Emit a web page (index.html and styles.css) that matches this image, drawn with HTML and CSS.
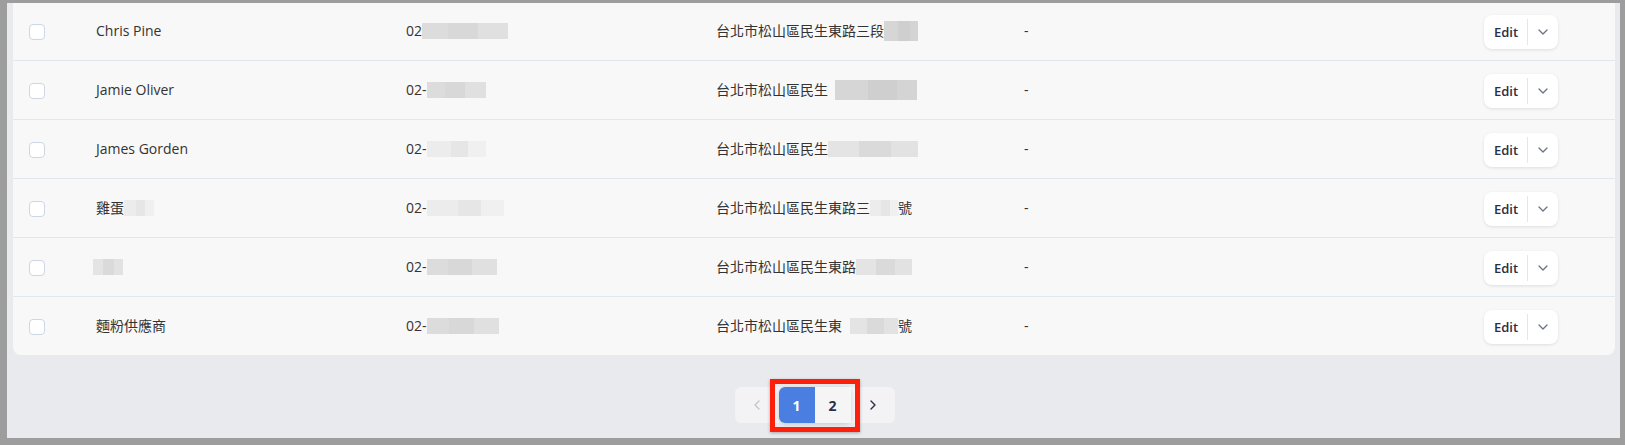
FILE: index.html
```html
<!DOCTYPE html>
<html lang="zh-Hant">
<head>
<meta charset="utf-8">
<title>Suppliers</title>
<link rel="stylesheet" href="styles.css">
</head>
<body>
<div class="screen">
  <div class="card">
    <div class="row">
      <span class="cb"></span>
      <span class="cell">Chris Pine</span>
      <span class="cell">02<span class="blur" style="width:86px"></span></span>
      <span class="cell">台北市松山區民生東路三段<span class="blur dark" style="width:34px"></span></span>
      <span class="cell">-</span>
      <span class="act"><span class="edit">Edit</span><span class="sep"></span><span class="dd"><svg viewBox="0 0 10 6" width="10" height="6"><path d="M1 1l4 4 4-4" fill="none" stroke="currentColor" stroke-width="1.3" stroke-linecap="round" stroke-linejoin="round"/></svg></span></span>
    </div>
    <div class="row">
      <span class="cb"></span>
      <span class="cell">Jamie Oliver</span>
      <span class="cell">02-<span class="blur" style="width:59px"></span></span>
      <span class="cell">台北市松山區民生<span class="blur dark" style="width:82px;margin-left:7px"></span></span>
      <span class="cell">-</span>
      <span class="act"><span class="edit">Edit</span><span class="sep"></span><span class="dd"><svg viewBox="0 0 10 6" width="10" height="6"><path d="M1 1l4 4 4-4" fill="none" stroke="currentColor" stroke-width="1.3" stroke-linecap="round" stroke-linejoin="round"/></svg></span></span>
    </div>
    <div class="row">
      <span class="cb"></span>
      <span class="cell">James Gorden</span>
      <span class="cell">02-<span class="blur light" style="width:59px"></span></span>
      <span class="cell">台北市松山區民生<span class="blur mid" style="width:90px"></span></span>
      <span class="cell">-</span>
      <span class="act"><span class="edit">Edit</span><span class="sep"></span><span class="dd"><svg viewBox="0 0 10 6" width="10" height="6"><path d="M1 1l4 4 4-4" fill="none" stroke="currentColor" stroke-width="1.3" stroke-linecap="round" stroke-linejoin="round"/></svg></span></span>
    </div>
    <div class="row">
      <span class="cb"></span>
      <span class="cell">雞蛋<span class="blur light" style="width:30px"></span></span>
      <span class="cell">02-<span class="blur light" style="width:77px"></span></span>
      <span class="cell">台北市松山區民生東路三<span class="blur light" style="width:28px"></span>號</span>
      <span class="cell">-</span>
      <span class="act"><span class="edit">Edit</span><span class="sep"></span><span class="dd"><svg viewBox="0 0 10 6" width="10" height="6"><path d="M1 1l4 4 4-4" fill="none" stroke="currentColor" stroke-width="1.3" stroke-linecap="round" stroke-linejoin="round"/></svg></span></span>
    </div>
    <div class="row">
      <span class="cb"></span>
      <span class="cell"><span class="blur mid" style="width:30px;margin-left:-3px"></span></span>
      <span class="cell">02-<span class="blur" style="width:70px"></span></span>
      <span class="cell">台北市松山區民生東路<span class="blur mid" style="width:56px"></span></span>
      <span class="cell">-</span>
      <span class="act"><span class="edit">Edit</span><span class="sep"></span><span class="dd"><svg viewBox="0 0 10 6" width="10" height="6"><path d="M1 1l4 4 4-4" fill="none" stroke="currentColor" stroke-width="1.3" stroke-linecap="round" stroke-linejoin="round"/></svg></span></span>
    </div>
    <div class="row">
      <span class="cb"></span>
      <span class="cell">麵粉供應商</span>
      <span class="cell">02-<span class="blur" style="width:72px"></span></span>
      <span class="cell">台北市松山區民生東<span class="blur mid" style="width:48px;margin-left:8px"></span>號</span>
      <span class="cell">-</span>
      <span class="act"><span class="edit">Edit</span><span class="sep"></span><span class="dd"><svg viewBox="0 0 10 6" width="10" height="6"><path d="M1 1l4 4 4-4" fill="none" stroke="currentColor" stroke-width="1.3" stroke-linecap="round" stroke-linejoin="round"/></svg></span></span>
    </div>
  </div>

  <nav class="pager">
    <span class="pbtn prev"><svg viewBox="0 0 6 10" width="6" height="10"><path d="M5 1L1 5l4 4" fill="none" stroke="currentColor" stroke-width="1.3" stroke-linecap="round" stroke-linejoin="round"/></svg></span>
    <span class="pages">
      <span class="num active">1</span>
      <span class="num">2</span>
      <span class="mark"></span>
    </span>
    <span class="pbtn next"><svg viewBox="0 0 6 10" width="6" height="10"><path d="M1 1l4 4-4 4" fill="none" stroke="currentColor" stroke-width="1.4" stroke-linecap="round" stroke-linejoin="round"/></svg></span>
  </nav>
</div>
</body>
</html>
```
FILE: styles.css
```css
html, body {
  margin: 0;
  padding: 0;
}
body {
  background: #9d9d9e;
  font-family: "Open Sans", "Noto Sans CJK TC", sans-serif;
  font-size: 14px;
  color: #333;
  width: 1625px;
  height: 445px;
  overflow: hidden;
  padding: 3px 5px 7px 7px;
  box-sizing: border-box;
}
.screen {
  background: #e9eaee;
  height: 435px;
  overflow: hidden;
  padding: 0 5px 0 6px;
  display: flex;
  flex-direction: column;
}
.card {
  background: #f8f8f8;
  border-radius: 0 0 8px 8px;
  margin-top: -1px;
}
.row {
  display: grid;
  grid-template-columns: 67px 310px 310px 308px 1fr 74px;
  align-items: center;
  height: 58px;
  padding: 0 57px 0 16px;
  border-bottom: 1px solid #e2e6ee;
}
.row:last-child {
  border-bottom: none;
}
.cb {
  width: 14px;
  height: 14px;
  border: 1px solid #cdd6e4;
  border-radius: 4px;
  background: #fff;
  margin-top: 2px;
}
.cell {
  display: flex;
  align-items: center;
  white-space: nowrap;
  line-height: 20px;
}
.blur {
  display: inline-block;
  height: 16px;
  background: linear-gradient(90deg, #dcdcdc 0 30%, #d8d8d8 30% 65%, #e0e0e0 65% 100%);
}
.blur.dark {
  height: 20px;
  background: linear-gradient(90deg, #d6d6d6 0 40%, #cfcfcf 40% 75%, #d4d4d4 75% 100%);
}
.blur.light {
  background: linear-gradient(90deg, #ececec 0 40%, #e6e6e6 40% 70%, #f0f0f0 70% 100%);
}
.blur.mid {
  background: linear-gradient(90deg, #e4e4e4 0 35%, #dadada 35% 70%, #e2e2e2 70% 100%);
}
.act {
  display: flex;
  align-items: center;
  height: 34px;
  background: #fff;
  border-radius: 8px;
  box-shadow: 0 1px 3px rgba(30, 40, 60, 0.12);
  margin-top: 2px;
}
.edit {
  width: 42px;
  text-align: center;
  font-size: 13px;
  font-weight: 600;
  color: #2a2f45;
  padding-left: 1px;
}
.sep {
  width: 1px;
  height: 26px;
  background: #e3e6ec;
}
.dd {
  flex: 1;
  display: flex;
  justify-content: center;
  color: #6b7280;
}
.pager {
  align-self: center;
  display: flex;
  margin-top: 32px;
  height: 36px;
  margin-left: 1px;
  background: #f3f3f5;
  border-radius: 6px;
}
.pbtn {
  width: 44px;
  display: flex;
  align-items: center;
  justify-content: center;
}
.prev {
  color: #c0c4cd;
}
.next {
  color: #2a2f45;
}
.pages {
  position: relative;
  display: flex;
  border-radius: 6px;
  box-shadow: 0 1px 4px rgba(0, 0, 0, 0.15);
}
.num {
  width: 36px;
  display: flex;
  align-items: center;
  justify-content: center;
  font-weight: 700;
  font-size: 14px;
  color: #2a2f45;
  background: #f5f5f6;
}
.num:last-of-type {
  border-radius: 0 6px 6px 0;
}
.num.active {
  background: #4a7fe1;
  color: #fff;
  border-radius: 6px 0 0 6px;
}
.mark {
  position: absolute;
  left: -9px;
  right: -9px;
  top: -8px;
  bottom: -9px;
  border: 5px solid #fb1f0c;
  box-shadow: 0 1px 3px rgba(0, 0, 0, 0.3);
}
```
